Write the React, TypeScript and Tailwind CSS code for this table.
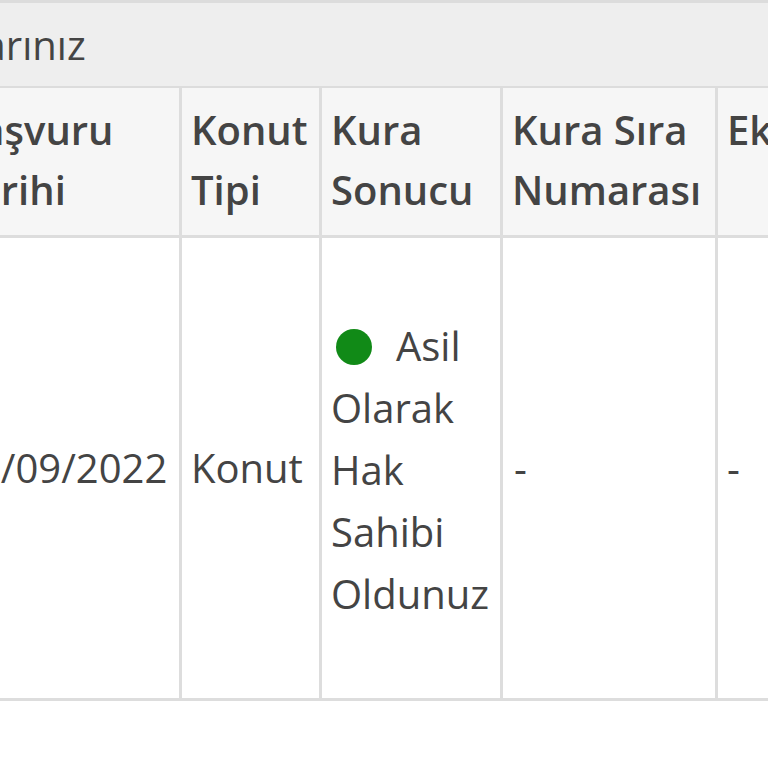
const font = { fontFamily: '"Open Sans", "Noto Sans", sans-serif' };

export default function App() {
  return (
    <div className="w-[768px] h-[768px] overflow-hidden bg-white text-[#444]" style={font}>
      <div className="ml-[-57px] w-[1100px]">
        {/* Panel heading */}
        <div className="h-[88px] border-t-[3px] border-b-[2px] border-[#dcdcdc] bg-[#eeeeee] flex items-center pl-[12px] text-[40px]">
          <span className="ml-[-134px]">Başvurularınız</span>
        </div>

        {/* Header row */}
        <div className="flex bg-[#f6f6f6] border-b-[3px] border-[#dddddd] h-[150px] font-semibold text-[40px] leading-[60px]">
          <div className="w-[239px] shrink-0 border-r-[3px] border-[#dddddd] pl-[12px] pt-[12px]">
            Başvuru Tarihi
          </div>
          <div className="w-[140px] shrink-0 border-r-[3px] border-[#dddddd] pl-[9px] pt-[12px]">
            Konut Tipi
          </div>
          <div className="w-[181px] shrink-0 border-r-[3px] border-[#dddddd] pl-[9px] pt-[12px]">
            Kura Sonucu
          </div>
          <div className="w-[215px] shrink-0 border-r-[3px] border-[#dddddd] pl-[9px] pt-[12px]">
            Kura Sıra Numarası
          </div>
          <div className="w-[200px] shrink-0 pl-[9px] pt-[12px]">Ek Bilgi</div>
        </div>

        {/* Body row */}
        <div className="flex border-b-[3px] border-[#dddddd] h-[463px] text-[40px] leading-[62px]">
          <div className="w-[239px] shrink-0 border-r-[3px] border-[#dddddd] pl-[12px] flex items-center">
            12/09/2022
          </div>
          <div className="w-[140px] shrink-0 border-r-[3px] border-[#dddddd] pl-[9px] flex items-center">
            Konut
          </div>
          <div className="w-[181px] shrink-0 border-r-[3px] border-[#dddddd] pl-[9px] flex items-center">
            <div className="pt-[4px]">
              <span className="inline-block w-[36px] h-[36px] rounded-full bg-[#118a17] align-[-4px] ml-[5px] mr-[24px]"></span>
              Asil Olarak Hak Sahibi Oldunuz
            </div>
          </div>
          <div className="w-[215px] shrink-0 border-r-[3px] border-[#dddddd] pl-[11px] flex items-center">
            -
          </div>
          <div className="w-[200px] shrink-0 pl-[9px] flex items-center">-</div>
        </div>
      </div>
    </div>
  );
}
